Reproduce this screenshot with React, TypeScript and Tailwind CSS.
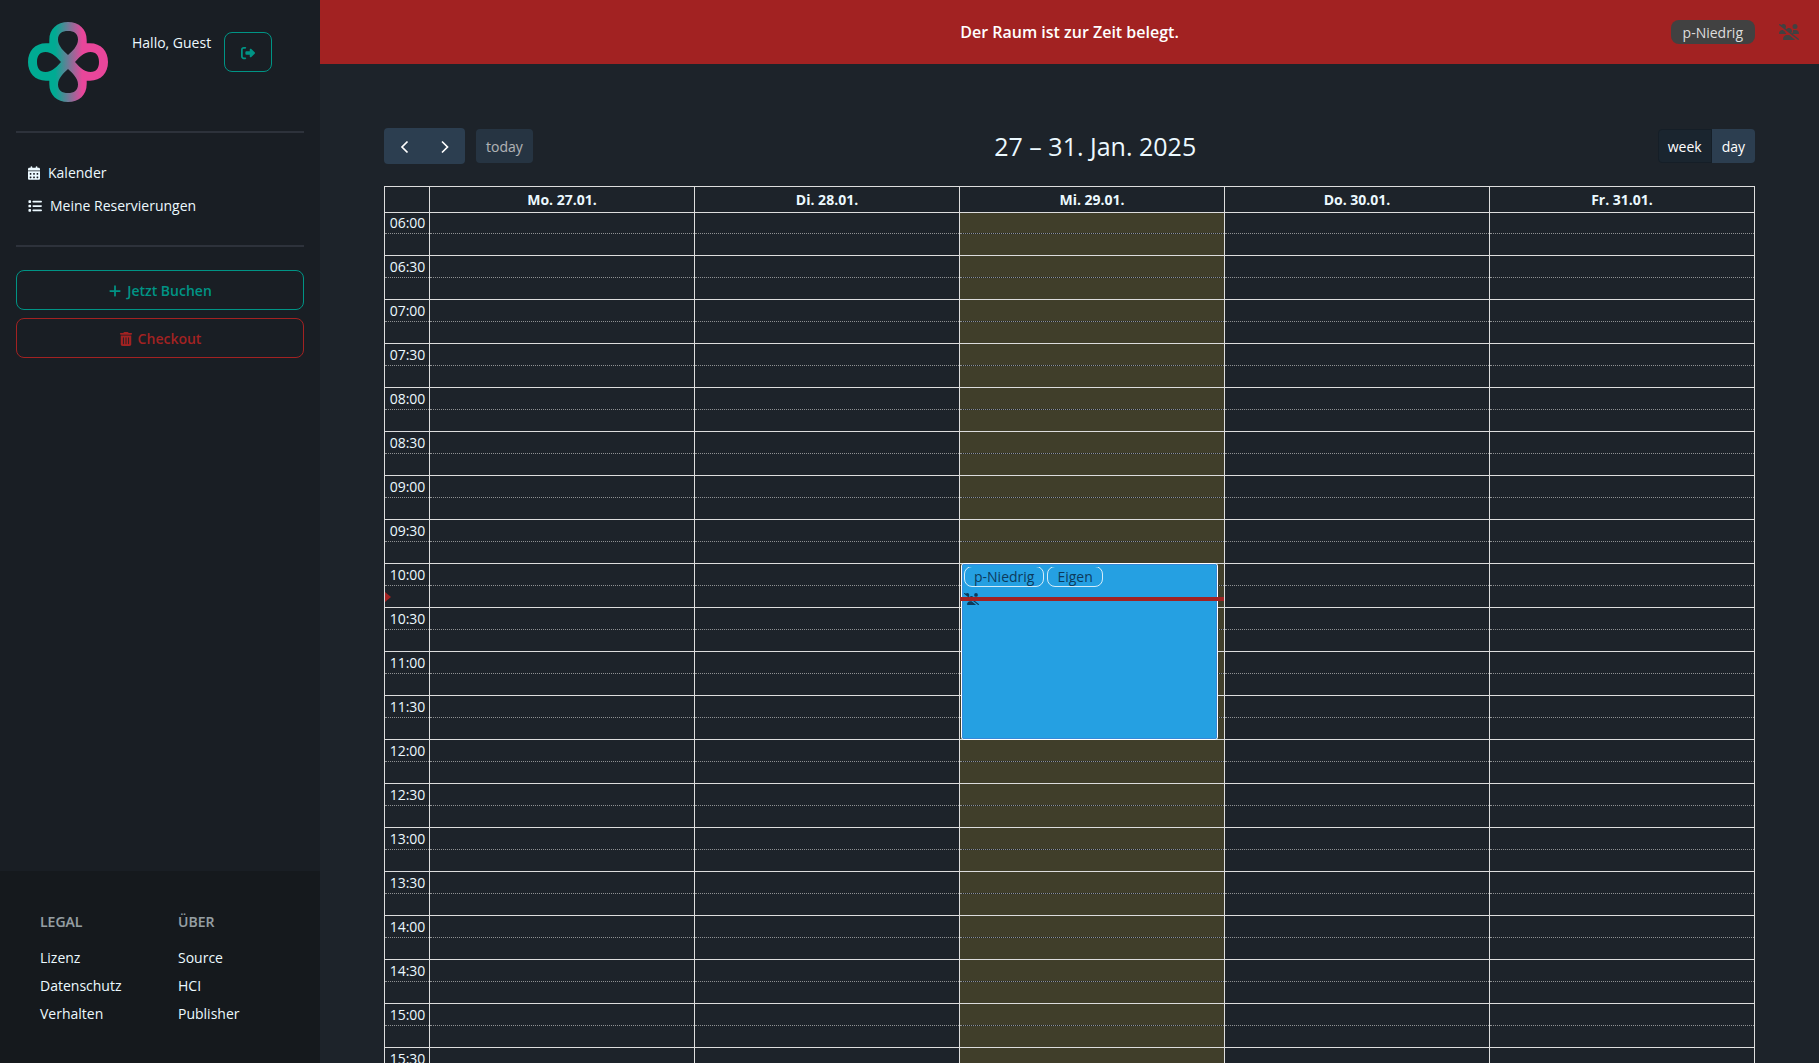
import { FaCalendarDays, FaList, FaPlus, FaRightFromBracket, FaTrashCan, FaUsersSlash } from "react-icons/fa6";

const days = ["Mo. 27.01.", "Di. 28.01.", "Mi. 29.01.", "Do. 30.01.", "Fr. 31.01."];
const today = 2;
const times = Array.from({ length: 20 }, (_, i) => {
  const hour = String(6 + Math.floor(i / 2)).padStart(2, "0");
  return `${hour}:${i % 2 ? "30" : "00"}`;
});

function Logo() {
  return (
    <svg viewBox="0 0 80 80" className="size-20" role="img" aria-label="Logo">
      <defs>
        <linearGradient id="logo" gradientUnits="userSpaceOnUse" x1="0" y1="0" x2="80" y2="0">
          <stop offset="0.34" stopColor="#00ab93" />
          <stop offset="0.68" stopColor="#e8469a" />
        </linearGradient>
      </defs>
      <path
        fill="url(#logo)"
        fillRule="evenodd"
        d="M21.300 21.300V18C21.300 7 29 0 40 0S58.700 7 58.700 18V21.300H62C73 21.300 80 29 80 40S73 58.700 62 58.700H58.700V62C58.700 73 51 80 40 80S21.300 73 21.300 62V58.700H18C7 58.700 0 51 0 40S7 21.300 18 21.300Z
        M40 33C36 29.500 30 24 30 17.500C30 11.500 34 9 40 9C46 9 50 11.500 50 17.500C50 24 44 29.500 40 33Z
        M40 47C36 50.500 30 56 30 62.500C30 68.500 34 71 40 71C46 71 50 68.500 50 62.500C50 56 44 50.500 40 47Z
        M33 40C29.500 36 24 30 17.500 30C11.500 30 9 34 9 40C9 46 11.500 50 17.500 50C24 50 29.500 44 33 40Z
        M47 40C50.500 36 56 30 62.500 30C68.500 30 71 34 71 40C71 46 68.500 50 62.500 50C56 50 50.500 44 47 40Z"
      />
    </svg>
  );
}

function Sidebar() {
  return (
    <aside className="flex w-80 shrink-0 flex-col bg-[#191e24]">
      <div className="mx-4 flex border-b-2 border-[#2d323b] pt-[22px] pb-[29px] pl-3">
        <Logo />
        <p className="mt-[11px] ml-6">Hallo, Guest</p>
        <button
          aria-label="Abmelden"
          className="mt-[10px] ml-[13px] flex h-10 w-12 items-center justify-center rounded-lg border border-[#009485] pt-0.5 text-[#009485]"
        >
          <FaRightFromBracket />
        </button>
      </div>
      <nav className="mx-4 flex flex-col border-b-2 border-[#2d323b] py-[23px]">
        <a href="#kalender" className="flex h-[33px] items-center gap-2 px-3">
          <FaCalendarDays className="h-[14px] w-3" />
          Kalender
        </a>
        <a href="#reservierungen" className="flex h-[33px] items-center gap-2 px-3">
          <FaList />
          Meine Reservierungen
        </a>
      </nav>
      <div className="mx-4 mt-[23px] flex flex-col gap-2 font-semibold">
        <button className="flex h-10 items-center justify-center gap-[5px] rounded-lg border border-[#009485] pt-0.5 text-[#009485]">
          <FaPlus />
          Jetzt Buchen
        </button>
        <button className="flex h-10 items-center justify-center gap-[5px] rounded-lg border border-[#a22222] pt-0.5 text-[#a22222]">
          <FaTrashCan />
          Checkout
        </button>
      </div>
      <footer className="mt-auto grid h-48 grid-cols-2 bg-[#15191d] px-10 pt-[41px]">
        <nav className="flex flex-col items-start gap-2">
          <h6 className="mb-2 font-semibold uppercase opacity-60">Legal</h6>
          <a href="#lizenz">Lizenz</a>
          <a href="#datenschutz">Datenschutz</a>
          <a href="#verhalten">Verhalten</a>
        </nav>
        <nav className="ml-[18px] flex flex-col items-start gap-2">
          <h6 className="mb-2 font-semibold uppercase opacity-60">Über</h6>
          <a href="#source">Source</a>
          <a href="#hci">HCI</a>
          <a href="#publisher">Publisher</a>
        </nav>
      </footer>
    </aside>
  );
}

function Chevron({ d }: { d: string }) {
  return (
    <svg viewBox="0 0 14 14" className="size-[14px]" fill="none" stroke="currentColor" strokeWidth="1.700" aria-hidden="true">
      <path d={d} />
    </svg>
  );
}

function Toolbar() {
  return (
    <div className="mb-[22px] flex h-9 items-center justify-between">
      <div className="flex items-center gap-[11px]">
        <div className="flex h-9 overflow-hidden rounded bg-[#2c3e50] pt-0.5 text-white">
          <button aria-label="zurück" className="flex w-[41px] items-center justify-center">
            <Chevron d="M9.500 1.500 4 7l5.500 5.500" />
          </button>
          <button aria-label="weiter" className="flex w-10 items-center justify-center">
            <Chevron d="M4 1.500 9.500 7 4 12.500" />
          </button>
        </div>
        <button disabled className="h-[34px] rounded bg-[#2c3e50] px-[10px] pt-0.5 text-white opacity-65">
          today
        </button>
      </div>
      <h2 className="text-[25px] leading-9">27 – 31. Jan. 2025</h2>
      <div className="flex h-[34px] text-white">
        <button className="rounded-l border border-[#151e27] bg-[#1a252f] px-[9px] pt-0.5">week</button>
        <button className="rounded-r bg-[#2c3e50] px-[10px] pt-0.5">day</button>
      </div>
    </div>
  );
}

function Booking() {
  return (
    <>
      <div className="absolute -top-px right-[6px] left-[1px] z-10 h-[177px] rounded-[3px] border border-white bg-[#25a0e2] text-[#0d3b5c]">
        <div className="h-full rounded-[2px] border border-[#3788d8] px-px pt-[2px]">
          <div className="flex gap-[3px] overflow-hidden">
            <span className="-mt-px h-[21px] rounded-lg border border-white/80 px-[9px] leading-5">p-Niedrig</span>
            <span className="-mt-px h-[21px] rounded-lg border border-white/80 px-[9px] leading-5">Eigen</span>
          </div>
          <FaUsersSlash className="mt-[6px] h-3 w-[15px]" />
        </div>
      </div>
      <div className="absolute top-[33px] right-0 left-0 z-20 h-1 bg-[#a22222]" />
    </>
  );
}

function Calendar() {
  return (
    <table className="w-full table-fixed border-collapse border border-[#dddddd]">
      <colgroup>
        <col className="w-[45px]" />
        {days.map((day) => (
          <col key={day} />
        ))}
      </colgroup>
      <thead>
        <tr className="h-[26px]">
          <th className="border border-[#dddddd]" />
          {days.map((day) => (
            <th key={day} className="border border-[#dddddd] font-bold">
              {day}
            </th>
          ))}
        </tr>
      </thead>
      {times.map((time, i) => (
        <tbody key={time}>
          <tr className={i === 0 ? "h-[21px]" : "h-[22px]"}>
            <th className="relative border-x border-t border-[#dddddd] pl-px text-center font-normal leading-5">
              {time}
              {time === "10:00" && (
                <span className="absolute top-[28px] left-0 border-y-[5px] border-l-[6px] border-y-transparent border-l-[#a22222]" />
              )}
            </th>
            {days.map((day, d) => (
              <td
                key={day}
                className={
                  d === today
                    ? "relative border-x border-t border-[#dddddd] bg-[#403e2a]"
                    : "border-x border-t border-[#dddddd]"
                }
              >
                {d === today && time === "10:00" && <Booking />}
              </td>
            ))}
          </tr>
          <tr className="h-[22px]">
            <td className="border-x border-t border-[#dddddd] border-t-[#8f9193] [border-top-style:dotted]" />
            {days.map((day, d) => (
              <td
                key={day}
                className={
                  d === today
                    ? "border-x border-t border-[#dddddd] border-t-[#8f9193] bg-[#403e2a] [border-top-style:dotted]"
                    : "border-x border-t border-[#dddddd] border-t-[#8f9193] [border-top-style:dotted]"
                }
              />
            ))}
          </tr>
        </tbody>
      ))}
    </table>
  );
}

export default function App() {
  return (
    <div className="flex h-screen overflow-hidden bg-[#1d232a] font-['Open_Sans',sans-serif] text-[14px] leading-5 text-[#ecf9ff]">
      <Sidebar />
      <main className="flex min-w-0 flex-1 flex-col overflow-hidden">
        <header className="grid h-16 shrink-0 grid-cols-[1fr_auto_1fr] items-center bg-[#a22222] text-white">
          <h1 className="col-start-2 text-base font-semibold">Der Raum ist zur Zeit belegt.</h1>
          <div className="mr-5 flex items-center justify-end gap-6 text-[#414141]">
            <span className="h-6 rounded-lg bg-[#414141] px-3 pt-px leading-6 text-[#dddddd]">p-Niedrig</span>
            <FaUsersSlash className="h-4 w-5" />
          </div>
        </header>
        <section className="px-16 pt-16">
          <Toolbar />
          <Calendar />
        </section>
      </main>
    </div>
  );
}
